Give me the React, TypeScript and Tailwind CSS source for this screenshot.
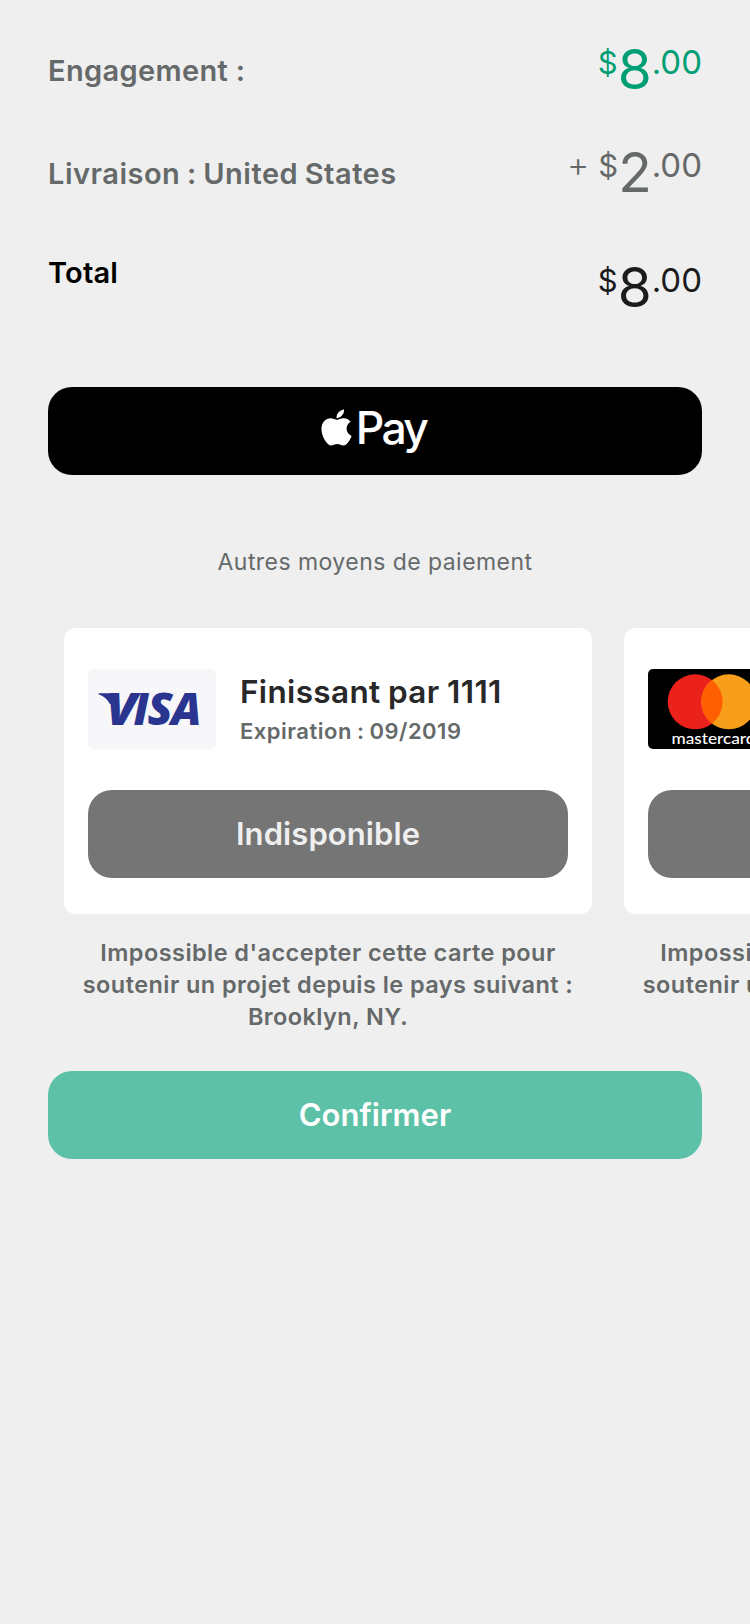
import { FaApple } from "react-icons/fa";

function Price({ whole, color, prefix }: { whole: string; color: string; prefix?: boolean }) {
  return (
    <div className={`flex items-start ${color}`}>
      {prefix && <span className="mr-[9px] text-[34px] leading-[23px] font-[350]">+</span>}
      <span className="text-[31px] leading-[25px]">$</span>
      <span className="text-[55px] leading-[39px]">{whole}</span>
      <span className="text-[33px] leading-[24px] font-normal">.00</span>
    </div>
  );
}

function VisaLogo() {
  return (
    <svg viewBox="0 0 128 80" className="h-20 w-32 shrink-0 rounded-[5px] bg-[#f7f7f9]" role="img" aria-label="Visa">
      <path d="M10.500 24.300H23c2.500 0 3.500.8 4 3l1.500 7-6.500 1C19.800 30.500 16 27 10.500 25.200z" fill="#2a3590" />
      <g fontSize="43.500" fill="#2a3590" className="font-['Open_Sans',sans-serif] font-extrabold italic">
        <text transform="translate(18 55.500) scale(1.16 1)">V</text>
        <text x="45.500" y="55.500">
          I
        </text>
        <text transform="translate(59.500 55.500) scale(1.06 1)">S</text>
        <text transform="translate(83 55.500) scale(1.04 1)">A</text>
      </g>
    </svg>
  );
}

function MastercardLogo() {
  return (
    <svg viewBox="0 0 128 80" className="h-20 w-32 shrink-0 rounded-[5px] bg-black" role="img" aria-label="Mastercard">
      <circle cx="47.200" cy="32.800" r="27.500" fill="#eb211c" />
      <circle cx="80.800" cy="32.800" r="27.500" fill="#f79f1a" />
      <path d="M64 11.030a27.500 27.500 0 0 1 0 43.540a27.500 27.500 0 0 1 0-43.540z" fill="#ff5f00" />
      <text
        x="23.500"
        y="74.500"
        textLength="84"
        lengthAdjust="spacingAndGlyphs"
        fontSize="16"
        fill="#fff"
        className="font-[Lato,sans-serif] font-medium"
      >
        mastercard
      </text>
    </svg>
  );
}

function PaymentCard({ logo, digits, expiry }: { logo: React.ReactNode; digits: string; expiry: string }) {
  return (
    <article className="w-[528px] shrink-0">
      <div className="h-[286px] rounded-xl bg-white px-6 pt-[41px]">
        <div className="flex h-20 gap-6">
          {logo}
          <div className="whitespace-nowrap pt-1">
            <h3 className="text-[31.500px] leading-[38px] font-semibold tracking-[0.35px] [word-spacing:-0.8px] text-[#282828]">
              Finissant par {digits}
            </h3>
            <p className="pt-[5px] text-[22px] leading-[30px] font-semibold tracking-[0.5px] [word-spacing:-1px] text-[#656969]">
              Expiration : {expiry}
            </p>
          </div>
        </div>
        <button
          disabled
          className="mt-[41px] block h-[88px] w-full rounded-[24px] bg-[#757575] text-[31px] font-semibold tracking-[0.08px] text-[#efefef]"
        >
          Indisponible
        </button>
      </div>
      <p className="pt-[23px] text-center text-[23.500px] leading-[32px] font-semibold tracking-[0.43px] whitespace-nowrap text-[#656969]">
        Impossible d'accepter cette carte pour
        <br />
        soutenir un projet depuis le pays suivant :
        <br />
        Brooklyn, NY.
      </p>
    </article>
  );
}

export default function App() {
  return (
    <main className="h-[1624px] w-[750px] overflow-hidden bg-[#efefef] pt-[50px] font-[Inter,sans-serif]">
      <section className="px-12 text-[29px] font-semibold">
        <div className="flex h-[39px] items-start justify-between">
          <span className="leading-[41px] tracking-[0.35px] text-[#656969]">Engagement :</span>
          <div className="font-normal">
            <Price whole="8" color="text-[#009e74]" />
          </div>
        </div>
        <div className="mt-16 flex h-[39px] items-start justify-between">
          <span className="leading-[41px] tracking-[0.5px] [word-spacing:-1.2px] text-[#656969]">
            Livraison : United States
          </span>
          <div className="font-normal">
            <Price whole="2" color="text-[#656969]" prefix />
          </div>
        </div>
        <div className="mt-[70px] flex h-[45px] items-start justify-between">
          <span className="leading-[21px] tracking-[0.2px] text-black">Total</span>
          <div className="pt-[6px] font-normal">
            <Price whole="8" color="text-[#1b1b1b]" />
          </div>
        </div>
      </section>

      <div className="px-12 pt-20">
        <button className="flex h-[88px] w-full items-center justify-center rounded-[24px] bg-black pr-[3px] text-white">
          <FaApple className="mr-[4px] mb-[8px] h-[41px] w-[31px]" />
          <span className="mb-[6px] text-[44.500px] leading-[80px] font-medium tracking-[-2.6px]">Pay</span>
        </button>
      </div>

      <p className="pt-[71px] text-center text-[23px] leading-[32px] tracking-[0.45px] text-[#656969]">
        Autres moyens de paiement
      </p>

      <section className="flex gap-8 pt-[50px] pl-16">
        <PaymentCard logo={<VisaLogo />} digits="1111" expiry="09/2019" />
        <PaymentCard logo={<MastercardLogo />} digits="4444" expiry="10/2020" />
      </section>

      <div className="px-12 pt-[38px]">
        <button className="h-[88px] w-full rounded-[24px] bg-[#5dc1a8] text-[31px] font-semibold tracking-[0.05px] text-white">
          Confirmer
        </button>
      </div>
    </main>
  );
}
